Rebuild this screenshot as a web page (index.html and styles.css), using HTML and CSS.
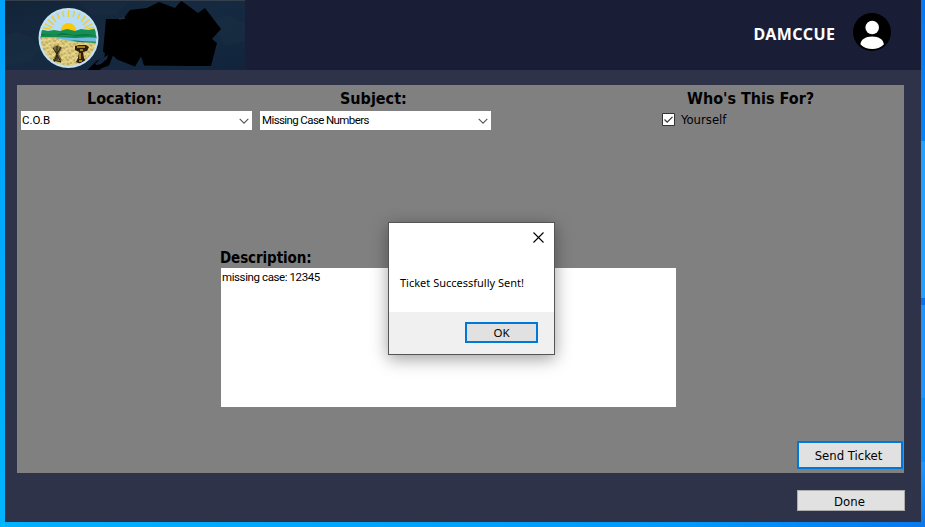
FILE: index.html
```html
<!DOCTYPE html>
<html lang="en">
<head>
<meta charset="utf-8">
<title>Ticket</title>
<link rel="stylesheet" href="styles.css">
</head>
<body>
<div class="window">
  <header class="header">
    <svg class="banner" width="240" height="70" viewBox="5 0 240 70">
      <defs>
        <linearGradient id="night" x1="0" y1="0" x2="1" y2="1"><stop offset="0" stop-color="#132438"/><stop offset=".5" stop-color="#152a40"/><stop offset="1" stop-color="#11243c"/></linearGradient>
        <clipPath id="seal"><circle cx="68.500" cy="38" r="27.800"/></clipPath>
        <pattern id="grain" width="9" height="7" patternUnits="userSpaceOnUse" patternTransform="rotate(18)"><path d="M0 1h3M5 3h2M2 5h3M7 6h2" stroke="#a58d48" stroke-width="1"/><path d="M4 1h2M1 3h1M6 5h2" stroke="#f7e7a0" stroke-width="1"/></pattern>
      </defs>
      <path fill="url(#night)" d="M5 0h240v70H5z"/>
      <path fill="#22374b" opacity=".2" d="M5 35l12-3 14 5 9 12-10 12-25 5zM78 2h50l-12 13-23 1zM210 20l18-5 17 8v18l-20 5z"/>
      <path fill="#343f4b" d="M5 0h240v1H5z"/>
      <circle cx="68.500" cy="38" r="30" fill="#c3e2f4"/>
      <g clip-path="url(#seal)">
        <path fill="#b9ddf2" d="M38 8h62v30H38z"/>
        <g stroke="#f3cb2b" stroke-width="1.300"><path d="M68.500 10v7M62.500 10.500l1.300 6.500M74.500 10.500l-1.300 6.500M56.500 12l3 7M80.500 12l-3 7M51 15l5 7M86 15l-5 7M47 19l7 6M90 19l-7 6M44 23.500l9 4.500M93 23.500l-9 4.500M41.500 27.500l9 1.500M95.500 27.500l-9 1.500"/></g>
        <circle cx="68.500" cy="30.500" r="7.500" fill="#fcc707"/>
        <path fill="#159052" d="M38 31l5-1 5 1 6-1 6 1 7-2 8 2 6-2 7 1 6-1 7 1v8H38z"/>
        <path fill="#087440" d="M38 34l18 1 6-2 12 2 12-1 14 2v3H38z"/>
        <path fill="#6ebce4" d="M38 36l17-1 21 1 24 2v7H38z"/>
        <path fill="#15884d" d="M38 35l20 0 17 1 25-1v2l-25 1-20-1H38zM70 40l12 1 18 1v2l-18-1z"/>
        <path fill="#dfcd80" d="M38 38l17 0 20 4 25 1v27H38z"/>
        <path fill="url(#grain)" d="M38 38l17 0 20 4 25 1v27H38z"/>
        <path fill="#796a3b" d="M53 47l5-2 4 3-3 6 3 6-4 1-5-1 3-6z"/>
        <path stroke="#261f12" d="M53 48l4 6 4-7M57 46v14M54 62l3-7 4 7M53 60l4 1 4 1" fill="none"/>
        <path fill="#2b1e0c" d="M75 46l4-1 7 0 3 2-2 4-4 1 1 6 2 3-5 3-5-2 2-4 1-6-4-2z"/>
        <path stroke="#cf9f1b" stroke-width="1.500" d="M77 47h8M80 50h3M80 53v6M79 61h3" fill="none"/>
      </g>
      <path fill-rule="evenodd" d="M106 19h17l7-9 17-2 12-6 16 6 6-7 2 1 15 11 7-5 16 21-9 10 5 4-6 23h-14l-53-.5-3-9-6 10-18-7-4-4-4 10-8 3-3 3-8 1-2-3 9-9 7-3 1-4-2-2zM101 64l-4 1-2-1 4-4 9-5-1 4z"/>
      <path d="M119 19l6-1" stroke="#28323a" stroke-width="1.500"/>
    </svg>
    <div class="account">
      <span class="username">DAMCCUE</span>
      <svg class="avatar" width="38" height="38" viewBox="0 0 38 38"><circle cx="19" cy="19" r="19"/><g fill="#fff"><circle cx="19.200" cy="14.500" r="6.800"/><path d="M7.500 31.500c0-5 5-8 11.700-8s11.600 3 11.600 8c-3 3-7.300 4.500-11.600 4.500s-8.700-1.500-11.700-4.500z"/></g></svg>
    </div>
  </header>
  <main class="panel">
    <div class="fields">
      <section class="field">
        <h2 class="label location">Location:</h2>
        <div class="select"><span class="small cob">C.O.B</span><svg width="10" height="6" viewBox="0 0 10 6"><path d="M.7.800l4.300 4.300L9.300.800" fill="none" stroke="#555" stroke-width="1.100"/></svg></div>
      </section>
      <section class="field">
        <h2 class="label subject">Subject:</h2>
        <div class="select"><span class="small missing">Missing Case Numbers</span><svg width="10" height="6" viewBox="0 0 10 6"><path d="M.7.800l4.300 4.300L9.300.800" fill="none" stroke="#555" stroke-width="1.100"/></svg></div>
      </section>
      <section class="audience">
        <h2 class="label who">Who's This For?</h2>
        <div class="check"><svg width="13" height="13" viewBox="0 0 13 13"><path d="M.5.500h12v12H.5z" fill="#fff" stroke="#333"/><path d="M2.500 6.500l2.700 2.700 5.300-5.400" fill="none" stroke="#333" stroke-width="1.200"/></svg><span class="yourself">Yourself</span></div>
      </section>
    </div>
    <section class="description">
      <h2 class="label desc">Description:</h2>
      <div class="textarea"><span class="small case">missing case: 12345</span></div>
    </section>
    <button class="button send"><span>Send Ticket</span></button>
  </main>
  <footer class="footer"><button class="button done"><span>Done</span></button></footer>
</div>
<div class="dialog">
  <div class="dialog-title"><svg width="11" height="11" viewBox="0 0 11 11"><path d="M.5.500l10 10M10.500.500l-10 10" stroke="#000" stroke-width="1.100"/></svg></div>
  <div class="dialog-text"><span class="message">Ticket Successfully Sent!</span></div>
  <div class="dialog-actions"><button class="button ok"><span>OK</span></button></div>
</div>
</body>
</html>
```

FILE: styles.css
```css
* { box-sizing: border-box; }
body {
  margin: 0;
  width: 925px;
  height: 527px;
  overflow: hidden;
  padding: 0 4px 5px 5px;
  background:
    linear-gradient(#0877f5 0, #0086fc 141px, #22a2ff 141px 298px, #0873ee 298px 305px, #1c96fc 305px 398px, #078ffc 398px 462px, #1c96fc 462px, #0878ee 527px) right top / 4px 527px no-repeat,
    linear-gradient(#00a2fb, #00b5ff) left top / 5px 527px no-repeat,
    linear-gradient(90deg, #00b2ff, #0098fa 75%, #0878ee) bottom / 925px 5px no-repeat;
  font-family: "DejaVu Sans Condensed", "DejaVu Sans", sans-serif;
  font-stretch: condensed;
  color: #000;
}
.window { height: 522px; background: #2f3349; }
.header { height: 70px; display: flex; justify-content: space-between; background: #191e36; }
.banner, svg { display: block; flex: none; }
.account { display: flex; align-items: center; padding: 0 30px 6px 0; gap: 18px; }
.username { color: #fff; font: bold 16px/20px "Noto Sans", sans-serif; letter-spacing: .45px; margin-right: -.45px; padding-top: 4px; white-space: nowrap; }
.panel { width: 887px; height: 388px; margin: 15px 0 0 12px; background: #808080; display: flex; flex-direction: column; }
.fields { height: 163px; padding-left: 4px; display: flex; gap: 8px; }
.field { width: 231px; }
.label { margin: 0; height: 26px; padding-top: 4px; font-size: 16px; line-height: 20px; font-weight: bold; white-space: nowrap; }
.location { padding-left: 66px; }
.subject { padding-left: 80px; }
.select { height: 19px; background: #fff; display: flex; justify-content: space-between; padding: 0 3px 0 1px; }
.select svg { margin-top: 7px; }
.small { font: 11.500px/18px Roboto, "Liberation Sans", sans-serif; white-space: nowrap; letter-spacing: -.4px; }
.cob { letter-spacing: 0; }
.missing { letter-spacing: -.6px; padding-left: 1px; }
.audience { margin-left: 163px; }
.who { padding-left: 25px; }
.check { display: flex; gap: 6px; padding: 2px 0 0 0; }
.yourself { font-size: 13px; line-height: 14px; height: 14px; }
.description { width: 455px; margin-left: 204px; }
.desc { height: 20px; padding: 0; margin-left: -1px; font-size: 15px; letter-spacing: -.1px; }
.textarea { width: 455px; height: 139px; background: #fff; padding-left: 1px; display: flex; }
.button { display: flex; justify-content: center; align-items: center; padding: 0; margin: 0; background: #e1e1e1; color: #000; font: inherit; font-size: 13px; line-height: 16px; white-space: nowrap; }
.send { width: 106px; height: 28px; margin: auto 1px 4px auto; border: 2px solid #0078d7; padding: 2px 3px 0 0; }
.footer { padding: 17px 16px 0 0; display: flex; justify-content: flex-end; }
.done { width: 108px; height: 21px; border: 1px solid #adadad; padding-top: 2px; padding-right: 3px; }
.dialog { position: absolute; left: 388px; top: 222px; width: 167px; height: 133px; border: 1px solid #555; background: #fff; box-shadow: 0 4px 16px rgba(0,0,0,.38); display: flex; flex-direction: column; }
.dialog-title { height: 51px; padding: 9px 10px 0 0; display: flex; justify-content: flex-end; }
.dialog-text { height: 38px; padding-left: 11px; font: 11px/18px "Noto Sans", sans-serif; white-space: nowrap; }
.dialog-actions { flex: 1; background: #f0f0f0; padding: 10px 16px 0 0; display: flex; justify-content: flex-end; }
.ok { width: 73px; height: 21px; border: 2px solid #0078d7; font: 11.500px/15px "Noto Sans", sans-serif; }
```
